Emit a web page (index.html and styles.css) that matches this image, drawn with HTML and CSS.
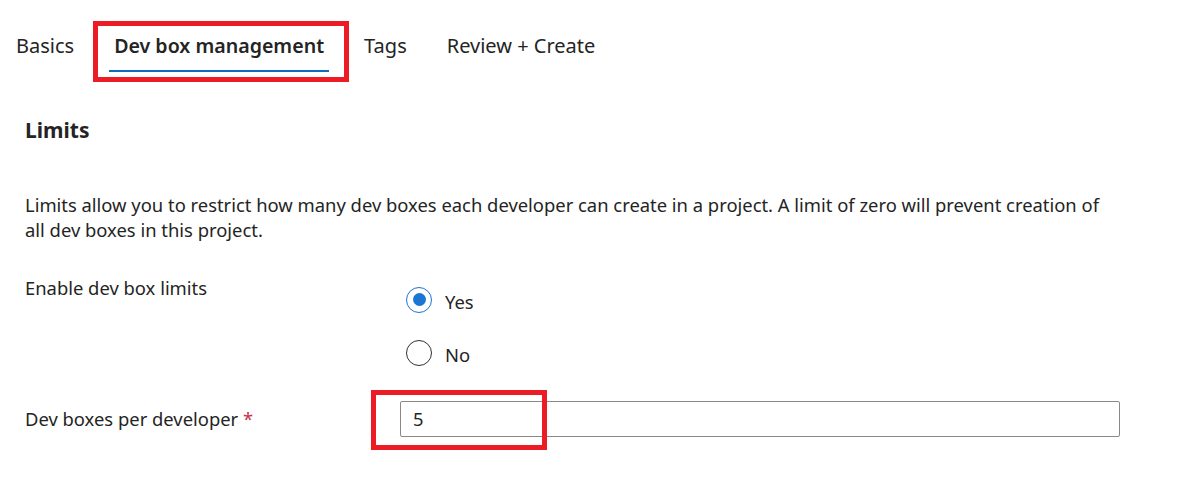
FILE: index.html
```html
<!DOCTYPE html>
<html lang="en">
<head>
<meta charset="utf-8">
<title>Dev box management</title>
<link rel="stylesheet" href="styles.css">
</head>
<body>
<nav class="tabs">
  <div class="tab">Basics</div>
  <div class="tab tab-active">Dev box management<div class="callout callout-tab"></div></div>
  <div class="tab">Tags</div>
  <div class="tab">Review + Create</div>
</nav>
<main class="section">
  <h2 class="heading">Limits</h2>
  <p class="desc">Limits allow you to restrict how many dev boxes each developer can create in a project. A limit of zero will prevent creation of all dev boxes in this project.</p>
  <div class="row row-radio">
    <div class="label">Enable dev box limits</div>
    <div class="radios">
      <label class="radio"><span class="dot dot-on"></span><span class="radio-text">Yes</span></label>
      <label class="radio"><span class="dot"></span><span class="radio-text">No</span></label>
    </div>
  </div>
  <div class="row row-input">
    <div class="label">Dev boxes per developer <span class="req">*</span></div>
    <div class="field">
      <div class="input">5</div>
      <div class="callout callout-input"></div>
    </div>
  </div>
</main>
</body>
</html>
```
FILE: styles.css
```css
* { box-sizing: border-box; }
html, body { min-height: 100%; }
body {
  margin: 0;
  font-family: "Noto Sans", "Open Sans", sans-serif;
  color: #242424;
  background: #fff;
}
.tabs {
  display: flex;
  gap: 30px;
  padding-left: 11px;
}
.tab {
  position: relative;
  font-size: 20px;
  line-height: 28px;
  padding: 32px 5px 10px;
  border-bottom: 2px solid transparent;
  color: #242424;
}
.tab-active {
  font-weight: 600;
  font-size: 19.6px;
  border-bottom-color: #0f6cbd;
}
.callout {
  position: absolute;
  display: block;
  z-index: 2;
  border: 5px solid #ed1c24;
}
.callout-tab {
  left: -16px;
  top: 21px;
  width: 256px;
  height: 61px;
}
.section {
  padding: 0 0 50px 25px;
}
.heading {
  margin: 44px 0 0;
  font-size: 21px;
  line-height: 28px;
  font-weight: 700;
}
.desc {
  margin: 48px 0 0;
  width: 1085px;
  font-size: 18.4px;
  line-height: 25px;
}
.row {
  display: grid;
  grid-template-columns: 375px 1fr;
  font-size: 18.4px;
  line-height: 25px;
}
.row-radio {
  margin-top: 33px;
  align-items: start;
}
.radios {
  display: flex;
  flex-direction: column;
  gap: 27px;
  padding: 11.5px 0 0 6px;
}
.radio {
  display: flex;
  align-items: center;
  gap: 13px;
  height: 26px;
}
.radio-text { padding-top: 4px; }
.dot {
  width: 26px;
  height: 26px;
  border-radius: 50%;
  border: 1.5px solid #323130;
  display: flex;
  align-items: center;
  justify-content: center;
  background: #fff;
}
.dot-on { border-color: #1976d2; }
.dot-on::after {
  content: "";
  width: 13px;
  height: 13px;
  border-radius: 50%;
  background: #1976d2;
}
.row-input {
  margin-top: 35px;
  align-items: center;
}
.req { color: #c4314b; }
.field {
  position: relative;
  width: 720px;
}
.input {
  height: 36px;
  border: 1px solid #8a8886;
  border-radius: 2px;
  padding-left: 12px;
  line-height: 34px;
  font-size: 18.4px;
}
.callout-input {
  left: -29px;
  top: -11px;
  width: 176px;
  height: 60px;
}
```
